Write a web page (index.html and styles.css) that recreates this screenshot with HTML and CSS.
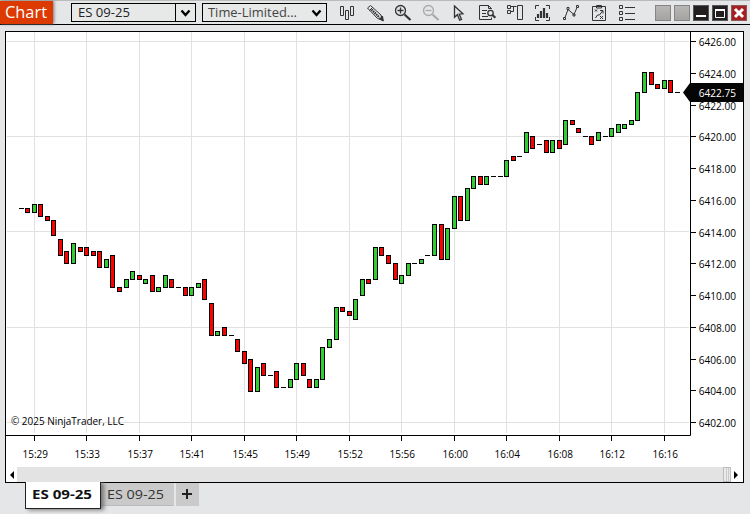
FILE: index.html
```html
<!DOCTYPE html>
<html lang="en">
<head>
<meta charset="utf-8">
<title>Chart</title>
<link rel="stylesheet" href="styles.css">
</head>
<body>
<header class="bar">
  <div class="tag"><svg width="53" height="23"><text x="5" y="17" textLength="42" lengthAdjust="spacingAndGlyphs">Chart</text></svg></div>
  <div class="select first"><svg width="103" height="17"><text x="6" y="13" textLength="52" lengthAdjust="spacingAndGlyphs">ES 09-25</text></svg><span class="drop split"><svg width="11" height="8" viewBox="0 0 11 8"><path d="M1.500 1.500 5.500 6 9.500 1.500"/></svg></span></div>
  <div class="select second"><svg width="103" height="17"><text x="5" y="13" textLength="89" lengthAdjust="spacingAndGlyphs">Time-Limited...</text></svg><span class="drop"><svg width="11" height="8" viewBox="0 0 11 8"><path d="M1.500 1.500 5.500 6 9.500 1.500"/></svg></span></div>
  <nav class="tools">
    <svg viewBox="333 0 28 24"><path d="M340.500 6.500h3v9h-3zM345.500 10.500h3v9h-3zM350.500 6.500h3v9h-3z"/></svg>
    <svg viewBox="361 0 28 24"><path d="M367.500 8 370.500 5.500 381 15 382.500 20 377.500 18.500zM369.500 10.500l3-3"/><path class="heavy" d="m371.500 9.500 8 8" stroke-dasharray="1.500 .7"/><path class="fill" d="m379.500 19 3-3 .8 5z"/></svg>
    <svg viewBox="389 0 28 24"><circle class="mid" cx="400.500" cy="10.500" r="5"/><path class="mid" d="M397.500 10.500h6M400.500 7.500v6"/><path class="heavy" d="m404.500 14.500 6 5.500"/></svg>
    <svg class="dim" viewBox="417 0 28 24"><circle class="mid" cx="428.500" cy="10.500" r="5"/><path class="mid" d="M425.500 10.500h6"/><path class="heavy" d="m432.500 14.500 6 5.500"/></svg>
    <svg viewBox="445 0 28 24"><path class="mid" d="M454.500 6v11.300l2.900-2.600 2.300 5.500 1.800-.8-2.300-5.300 3.700-.3z"/></svg>
    <svg viewBox="473 0 28 24"><path d="M491.500 9V8.500l-3-3h-9v14h12v-2M488.500 5.500v3h3M482 10.500h5M482 13.500h4M482 16.500h6"/><circle class="mid" cx="490.500" cy="13" r="2.700"/><path class="heavy" d="m492.500 15 2.800 2.700"/></svg>
    <svg viewBox="501 0 28 24"><path d="M507.500 5.500h3v3h-3zM507.500 10.500h3v3h-3zM511 6.500h5.500M511 11.500h2.500v-5M517.500 5.500h5v14h-5z"/></svg>
    <svg viewBox="529 0 28 24"><path d="M539 5.500h-3.500V9M546 5.500h3.500V9M539 20.500h-3.500V17M546 20.500h3.500V17"/><path class="heavy" d="M538 18v-4M541 18v-7M544 18V8M547 18v-5"/></svg>
    <svg viewBox="557 0 28 24"><path d="m565 17.500 3-8 6 5 3-7"/><path d="M563.500 17.500h2v2h-2zM567 7.500h2v2h-2zM573 14h2v2h-2zM576.500 5.500h2v2h-2z"/></svg>
    <svg viewBox="585 0 28 24"><path d="M592.500 6.500h13v14h-13zM596.500 5.500h5v2.500h-5zM595 9.500l2 2m0-2-2 2M600 16l3 3m0-3-3 3M595.500 18l2-3h2l3-4M600 10.500h3v3"/></svg>
    <svg viewBox="613 0 28 24"><path d="M619.500 5.500h3v3h-3zM619.500 11.500h3v3h-3zM619.500 17.500h3v3h-3zM625 7.500h10M625 13.500h10M625 19.500h10"/></svg>
  </nav>
  <div class="winbtns">
    <i class="wb blank"></i><i class="wb blank"></i>
    <svg class="wb dark" viewBox="0 0 14 14"><path class="w" d="M2 10h10"/></svg>
    <svg class="wb dark" viewBox="0 0 14 14"><path class="w" d="M2 4h10"/><path class="w thin" d="M2.500 3.500h9v8h-9z"/></svg>
    <svg class="wb close" viewBox="0 0 14 14"><path class="w x" d="m3 3 8 8m0-8-8 8"/></svg>
  </div>
</header>
<main class="panel">
  <svg id="chart" width="737" height="435" viewBox="6 32 737 435"></svg>
  <div class="scroll">
    <span class="arrow"><svg width="4" height="8"><path d="M4 0v8L0 4z"/></svg></span>
    <span class="track"></span>
    <span class="thumb"></span>
    <span class="arrow right"><svg width="4" height="8"><path d="M0 0v8l4-4z"/></svg></span>
  </div>
</main>
<footer class="tabs">
  <div class="tab active"><svg width="73" height="25"><text x="6" y="17" textLength="60" lengthAdjust="spacingAndGlyphs">ES 09-25</text></svg></div>
  <div class="tab"><svg width="73" height="22"><text x="6" y="16" textLength="57" lengthAdjust="spacingAndGlyphs">ES 09-25</text></svg></div>
  <div class="tab add"><svg width="23" height="22"><path d="M6 11h10M11 6v10"/></svg></div>
</footer>
<script src="chart.js"></script>
</body>
</html>
```
FILE: styles.css
```css
* { box-sizing: border-box; }
body { margin: 0; width: 750px; height: 514px; overflow: hidden; background: #e5e6e8; font-family: "Open Sans", "Noto Sans", sans-serif; }
svg { display: block; flex: none; }
.bar { display: flex; height: 25px; border-top: 1px solid #b9babc; border-bottom: 1px solid #000; }
.tag { width: 53px; height: 23px; background: #dc3a00; box-shadow: 1px 0 3px #777; }
.tag text { fill: #fff; font: 400 15.5px "Open Sans", sans-serif; }
.select { display: flex; width: 125px; height: 19px; margin-top: 2px; border: 1px solid #000; background: #e7e8e8; }
.select text { fill: #222; font: 400 12.5px "Open Sans", sans-serif; }
.first { margin-left: 18px; }
.second { margin-left: 6px; }
.second text { fill: #444; font-size: 13px; }
.drop { flex: 1; display: flex; align-items: center; justify-content: center; }
.split { border-left: 1px solid #000; }
.drop path { fill: none; stroke: #000; stroke-width: 2.3; }
.tools { display: flex; margin: -1px 0 0 6px; height: 24px; }
.tools svg { width: 28px; height: 24px; }
.tools path, .tools circle { fill: none; stroke: #333; stroke-width: 1; }
.tools .heavy { stroke-width: 2.2; }
.tools .mid { stroke-width: 1.3; }
.tools .fill { fill: #333; }
.tools .dim path, .tools .dim circle { stroke: #aaa; }
.winbtns { display: flex; gap: 3px; margin: 4px 0 0 14px; }
.wb { width: 16px; height: 16px; border: 1px solid #858585; }
.blank { background: linear-gradient(#b9b6b6, #a5a2a2); }
.dark { background: #231f20; border-color: #555; }
.close { background: #a51e22; border-color: #8c5557; }
.w { fill: none; stroke: #fff; stroke-width: 2; }
.w.thin { stroke-width: 1; }
.w.x { stroke-width: 3; }
.panel { width: 739px; height: 452px; margin: 6px 0 0 5px; border: 1px solid #000; background: #fff; }
.grid { stroke: #e1e1e1; stroke-width: 1; fill: none; }
.axis { stroke: #000; stroke-width: 1; fill: none; }
.label { fill: #000; font-size: 11.5px; }
.candle { stroke: #000; stroke-width: 1; }
.up { fill: #32cd32; }
.down { fill: #f00; }
.marker { fill: #050505; }
.now { fill: #fff; }
.scroll { display: flex; height: 15px; background: #e3e3e3; }
.arrow { display: flex; width: 11px; align-items: center; justify-content: center; background: #fff; }
.right { width: 12px; padding-right: 2px; }
.track { flex: 1; }
.thumb { width: 8px; border: 1px solid #bcbcbc; background: linear-gradient(90deg, #ebebeb 2px, #c8c8c8 2px 3px, #ebebeb 3px 4px, #c8c8c8 4px 5px, #ebebeb 5px); }
.tabs { display: flex; margin-left: 25px; }
.tab { width: 73px; height: 23px; margin-right: 2px; background: #cacaca; border-bottom: 1px solid #bbb; }
.tab text { fill: #333; font: 400 12.5px "Open Sans", sans-serif; }
.tab.active { position: relative; width: 76px; height: 27px; margin: -1px 0 0; background: #fff; border: 1px solid #222; border-top: 0; box-shadow: 3px 1px 4px #777; clip-path: inset(0 -8px -8px 0); }
.tab.active text { fill: #111; font-weight: 700; }
.tab.add { width: 23px; border-bottom-color: #cacaca; }
.add path { stroke: #222; stroke-width: 2; }
```
FILE: chart.js
```js
const root = document.getElementById('chart');
const add = (name, attrs, text) => {
  const el = document.createElementNS('http://www.w3.org/2000/svg', name);
  for (const key in attrs) el.setAttribute(key, attrs[key]);
  if (text) el.textContent = text;
  root.appendChild(el);
};
const label = (x, y, width, text, cls = 'label') =>
  add('text', { x, y, textLength: width, lengthAdjust: 'spacingAndGlyphs', class: cls }, text);

// Grid and axes
const times = ['15:29', '15:33', '15:37', '15:41', '15:45', '15:49', '15:52', '15:56', '16:00', '16:04', '16:08', '16:12', '16:16'];
const timeX = i => Math.floor(34.13 + 52.5 * i) + 0.5;
times.forEach((t, i) => add('path', { d: `M${timeX(i)} 32V433`, class: 'grid' }));
[41, 136, 231, 327, 422].forEach(y => add('path', { d: `M7 ${y + 0.5}H689`, class: 'grid' }));
add('path', { d: 'M6 435.5H690.5V32', class: 'axis' });
times.forEach((t, i) => {
  add('path', { d: `M${timeX(i)} 436v5`, class: 'axis' });
  label(timeX(i) - 12, 458, 25.5, t);
});
for (let i = 0; i < 13; i++) {
  const y = Math.round(41 + i * 31.75);
  add('path', { d: `M691 ${y + 0.5}h5`, class: 'axis' });
  label(698.7, y + 5, 37.3, (6426 - 2 * i).toFixed(2));
}

// Bars: u = rising, d = falling, n = unchanged; followed by top and bottom
const bars = `n208 d208-212 u204-212 d204-216 d216-220 d220-235 d239-255 d251-263 u243-263 d247-251 d247-255
d251-255 d251-267 u259-267 d255-287 d287-291 u279-287 u271-279 d275-279 u279-283 d275-291 u287-291 u275-287
d279-287 n287 d287-295 u287-295 u283-287 d279-299 d303-335 u331-335 d327-335 n335 d339-351 d351-363 d359-391
u367-391 d363-375 n375 d371-387 n387 u379-387 u363-379 d363-375 d379-387 u379-387 u347-379 u339-347 u307-339
d307-311 d311-315 u299-319 u279-295 d279-283 u247-279 d247-255 d255-263 d263-279 u275-283 u263-275 n263
u259-263 n255 u224-255 d224-259 u228-259 u196-228 d196-220 u188-220 u176-188 d176-184 u176-184 n176 n176
u160-176 d156-160 n156 u132-152 d136-148 n144 d140-152 u140-152 d140-148 u120-144 d120-124 d128-132 n136
d136-144 u132-140 n136 u128-136 u124-132 u124-128 u120-124 u92-120 u72-92 d72-84 d84-88 u80-88 d80-92 n92`.split(/\s+/);
bars.forEach((bar, n) => {
  const x = Math.floor(34.13 + 6.5625 * (n - 2));
  const [top, bottom] = bar.slice(1).split('-').map(Number);
  if (bar[0] === 'n') add('path', { d: `M${x - 2} ${top + 0.5}h5`, class: 'axis' });
  else add('rect', { x: x - 1.5, y: top + 0.5, width: 4, height: bottom - top, class: 'candle ' + (bar[0] === 'u' ? 'up' : 'down') });
});

// Last price
add('path', { d: 'M683 92.5 690 83H743V102H690z', class: 'marker' });
label(698.7, 97, 37.3, '6422.75', 'label now');
label(11, 425, 113, '© 2025 NinjaTrader, LLC');
```
